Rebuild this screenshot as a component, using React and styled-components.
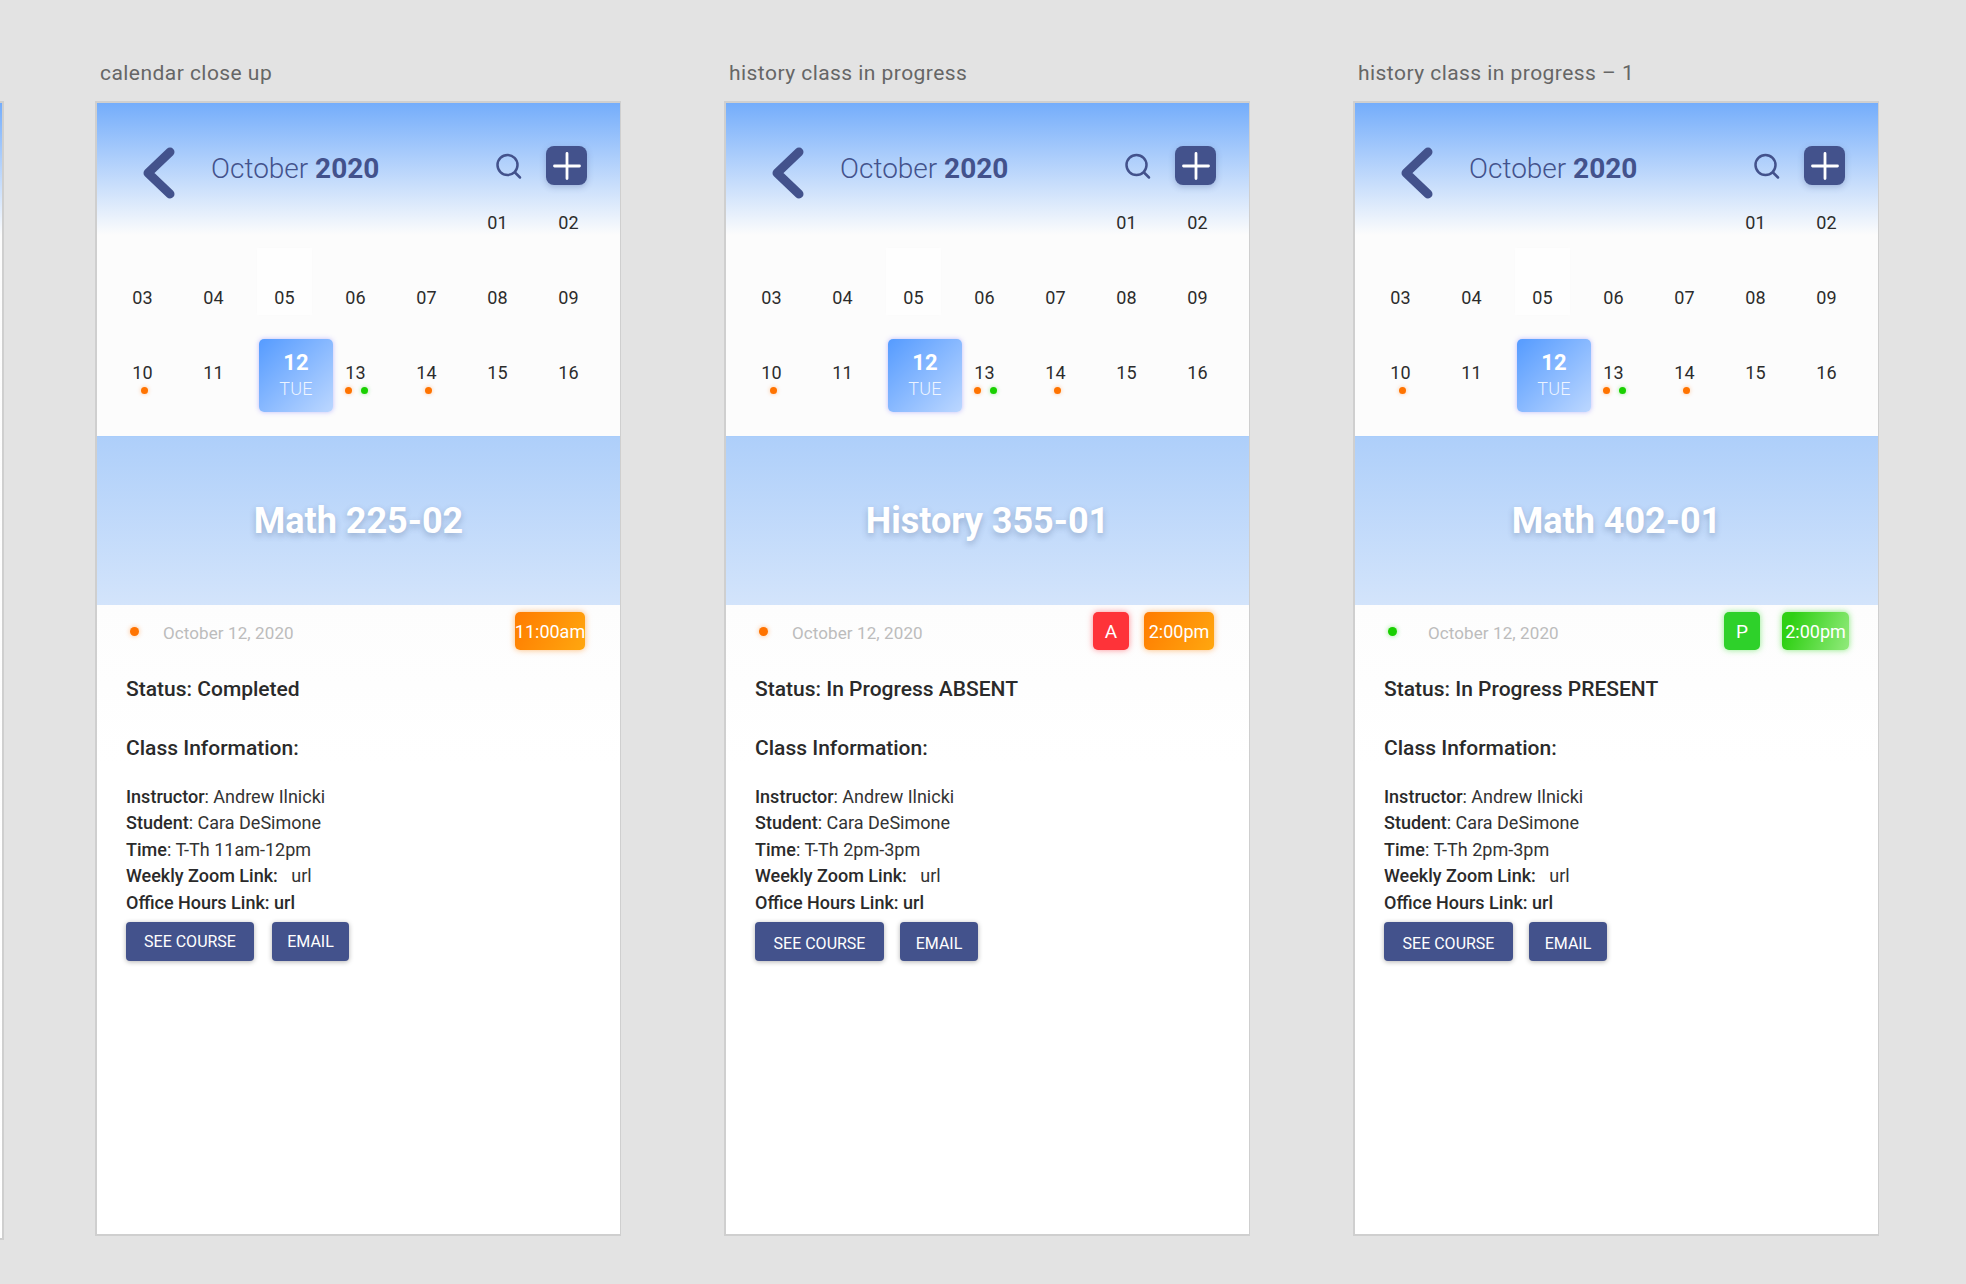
import React from 'react';
import styled, { createGlobalStyle } from 'styled-components';

const Global = createGlobalStyle`
  html, body { margin: 0; padding: 0; background: #e3e3e3; }
  body { width: 1966px; height: 1284px; overflow: hidden; font-family: Roboto, "Liberation Sans", sans-serif; }
`;
const Stage = styled.div`
  display: flex; align-items: flex-start; width: 1966px; height: 1284px; overflow: hidden; padding-top: 55px; box-sizing: border-box;
`;
const Sliver = styled.div`
  width: 2px; height: 1135px; margin-top: 46px; margin-right: 91px; flex: none; box-sizing: content-box;
  border: 2px solid #cfcfcf; border-left: 0; border-right-width: 2px;
  background: linear-gradient(#74adfb 0, #fcfcfc 132px, #fff 100%);
`;
const Column = styled.section`
  width: 526px; flex: none; margin-right: 103px;
`;
const Label = styled.div`
  height: 46px; line-height: 36px; padding-left: 5px; font-size: 21px; letter-spacing: 0.45px; color: #666;
`;
const Phone = styled.div`
  width: 523px; height: 1131px; border: 2px solid #cfcfcf; border-right-width: 1px; background: #fff; display: flex; flex-direction: column;
`;
const Calendar = styled.div`
  height: 333px; flex: none; background: linear-gradient(#74adfb 0, #fcfcfc 132px, #fcfcfc 100%);
`;
const Header = styled.header`
  height: 82px; display: flex; align-items: flex-start; padding-right: 33px; box-sizing: border-box;
`;
const Back = styled.svg`
  width: 40px; height: 60px; margin: 40px 0 0 42px; flex: none; overflow: visible;
`;
const Month = styled.div`
  margin: 49px 0 0 32px; font-size: 28px; line-height: 34px; font-weight: 300; color: #43528c; white-space: nowrap;
  b { font-weight: 700; }
`;
const SearchIcon = styled.svg`
  width: 28px; height: 28px; margin: 50px 0 0 auto; flex: none;
`;
const AddButton = styled.div`
  width: 41px; height: 39px; margin: 43px 0 0 23px; flex: none; border-radius: 8px; background: #43528c;
  box-shadow: 0 2px 6px rgba(67, 82, 140, .3); display: flex; align-items: center; justify-content: center;
`;
const Grid = styled.div`
  display: grid; grid-template-columns: repeat(7, 71px); grid-auto-rows: 75px; padding-left: 10px;
`;
const Cell = styled.div`
  position: relative; display: flex; align-items: center; justify-content: center; font-size: 18px; color: #2c2c2c; letter-spacing: .2px;
`;
const Ghost = styled.div`
  position: absolute; left: 8px; top: -12px; width: 55px; height: 67px; background: rgba(255,255,255,.75); box-shadow: 0 0 6px rgba(0,0,0,.012); z-index: 0;
`;
const CellText = styled.span`position: relative;`;
const Today = styled.div`
  position: absolute; left: 10px; top: 4px; width: 74px; height: 73px; border-radius: 5px; z-index: 1;
  background: linear-gradient(135deg, #559bff, #bcd7ff); box-shadow: 0 0 5px rgba(120, 110, 255, .45);
  color: #fff; display: flex; flex-direction: column; align-items: center;
`;
const TodayNum = styled.span`
  font-size: 22px; font-weight: 700; line-height: 26px; margin-top: 11px;
`;
const TodayDay = styled.span`
  font-size: 18px; font-weight: 300; line-height: 22px; margin-top: 2px; color: rgba(255,255,255,.85);
`;
const Dots = styled.div`
  position: absolute; top: 52px; left: 0; width: 100%; display: flex; justify-content: center; gap: 9px; padding-left: ${p => p.$shift}px; box-sizing: border-box;
`;
const Dot = styled.i`
  display: block; width: 7px; height: 7px; border-radius: 50%; background: ${p => p.$c};
  box-shadow: 0 0 4px ${p => p.$c}66;
`;
const Band = styled.div`
  height: 169px; flex: none; display: flex; align-items: center; justify-content: center;
  background: linear-gradient(#aecffa, #d3e4fb);
  border-top: 1px solid #a9cdfb; box-sizing: border-box;
`;
const Title = styled.h1`
  margin: 0; font-size: 36px; line-height: 44px; font-weight: 700; color: #fff; text-shadow: 0 3px 6px rgba(50, 70, 110, .3);
`;
const Body = styled.div`
  flex: 1; padding: 7px 0 0 29px; background: linear-gradient(#fdfdfd 0, #fff 160px);
`;
const Meta = styled.div`
  display: flex; align-items: center; height: 38px; padding-right: ${p => p.$right}px; gap: ${p => p.$gap}px;
`;
const MetaDot = styled.i`
  display: block; width: 9px; height: 9px; border-radius: 50%; margin-left: 4px; background: ${p => p.$c}; box-shadow: 0 0 5px ${p => p.$c}77;
`;
const DateText = styled.span`
  margin: 4px auto 0 9px; font-size: 17px; color: #bcbcbc; letter-spacing: .1px;
`;
const Badge = styled.div`
  width: ${p => p.$w}px; height: 38px; border-radius: 5px; display: flex; align-items: center; justify-content: center; color: #fff; flex: none;
  font-size: ${p => p.$size}px; background: ${p => p.$bg}; box-shadow: 0 0 6px ${p => p.$glow};
`;
const Heading = styled.h2`
  margin: ${p => p.$top}px 0 0; font-size: 21px; line-height: 28px; font-weight: 500; color: #2a2a2a;
`;
const Details = styled.div`
  margin-top: 22px; font-size: 18px; line-height: 26.4px; color: #333; white-space: pre;
  b { font-weight: 500; color: #2a2a2a; }
`;
const Buttons = styled.div`
  display: flex; gap: ${p => p.$gap}px; margin-top: 6px;
`;
const Button = styled.div`
  width: ${p => p.$w}px; height: 39px; border-radius: 4px; background: #43528c; color: #fff; box-shadow: 0 1px 5px rgba(0,0,0,.3);
  font-size: 16px; display: flex; align-items: center; justify-content: center; padding-top: ${p => p.$down}px; box-sizing: border-box;
`;

const ORANGE = '#ff7300';
const GREEN = '#19d000';
const ORANGE_BADGE = { bg: 'linear-gradient(120deg,#ff7b00,#ffa70f)', glow: 'rgba(255,130,0,.55)' };
const GREEN_BADGE = { bg: 'linear-gradient(110deg,#2fd014 15%,#92ea7c)', glow: 'rgba(60,220,40,.6)' };

const screens = [
  { label: 'calendar close up', title: 'Math 225-02', status: 'Status: Completed', dot: ORANGE, time: '11:00am', timeW: 70, timeStyle: ORANGE_BADGE, right: 35, gap: 15, when: 'T-Th 11am-12pm', btnGap: 18, seeW: 128, emailW: 77, down: 0 },
  { label: 'history class in progress', title: 'History 355-01', status: 'Status: In Progress ABSENT', dot: ORANGE, letter: 'A', letterBg: '#fe3339', letterGlow: 'rgba(255,50,60,.55)', time: '2:00pm', timeW: 70, timeStyle: ORANGE_BADGE, right: 35, gap: 15, when: 'T-Th 2pm-3pm', btnGap: 16, seeW: 129, emailW: 78, down: 3 },
  { label: 'history class in progress – 1', title: 'Math 402-01', status: 'Status: In Progress PRESENT', dot: GREEN, letter: 'P', letterBg: '#2ed12a', letterGlow: 'rgba(50,220,40,.55)', time: '2:00pm', timeW: 67, timeStyle: GREEN_BADGE, right: 29, gap: 22, when: 'T-Th 2pm-3pm', btnGap: 16, seeW: 129, emailW: 78, down: 3 },
];

const dates = [
  null, null, null, null, null, { n: '01' }, { n: '02' },
  { n: '03' }, { n: '04' }, { n: '05', ghost: true }, { n: '06' }, { n: '07' }, { n: '08' }, { n: '09' },
  { n: '10', dots: [ORANGE], shift: 4 }, { n: '11' }, { today: true }, { n: '13', dots: [ORANGE, GREEN], shift: 2 }, { n: '14', dots: [ORANGE], shift: 3 }, { n: '15' }, { n: '16' },
];

function Screen({ s }) {
  return (
    <Column>
      <Label>{s.label}</Label>
      <Phone>
        <Calendar>
          <Header>
            <Back viewBox="0 0 40 60">
              <path d="M31 9 L9 30 L31 51" fill="none" stroke="#43528c" strokeWidth="9" strokeLinecap="round" strokeLinejoin="round" />
            </Back>
            <Month>October <b>2020</b></Month>
            <SearchIcon viewBox="0 0 28 28">
              <circle cx="12.5" cy="12" r="10" fill="none" stroke="#43528c" strokeWidth="2.5" />
              <path d="M20 19.5 L25 24.5" stroke="#43528c" strokeWidth="2.5" strokeLinecap="round" />
            </SearchIcon>
            <AddButton>
              <svg width="28" height="28" viewBox="0 0 28 28">
                <path d="M14 1.5 V26.5 M1.5 14 H26.5" stroke="#fff" strokeWidth="2.8" strokeLinecap="round" />
              </svg>
            </AddButton>
          </Header>
          <Grid>
            {dates.map((d, i) => (
              <Cell key={i}>
                {d && d.ghost && <Ghost />}
                {d && d.n && <CellText>{d.n}</CellText>}
                {d && d.today && (
                  <Today>
                    <TodayNum>12</TodayNum>
                    <TodayDay>TUE</TodayDay>
                  </Today>
                )}
                {d && d.dots && (
                  <Dots $shift={d.shift}>
                    {d.dots.map((c, j) => <Dot key={j} $c={c} />)}
                  </Dots>
                )}
              </Cell>
            ))}
          </Grid>
        </Calendar>
        <Band><Title>{s.title}</Title></Band>
        <Body>
          <Meta $right={s.right} $gap={s.gap}>
            <MetaDot $c={s.dot} />
            <DateText>October 12, 2020</DateText>
            {s.letter && <Badge $w={36} $size={19} $bg={s.letterBg} $glow={s.letterGlow}>{s.letter}</Badge>}
            <Badge $w={s.timeW} $size={18} $bg={s.timeStyle.bg} $glow={s.timeStyle.glow}>{s.time}</Badge>
          </Meta>
          <Heading $top={25}>{s.status}</Heading>
          <Heading $top={31}>Class Information:</Heading>
          <Details>
            <div><b>Instructor</b>: Andrew Ilnicki</div>
            <div><b>Student</b>: Cara DeSimone</div>
            <div><b>Time</b>: {s.when}</div>
            <div><b>Weekly Zoom Link:</b>{'   '}url</div>
            <div><b>Office Hours Link: url</b></div>
          </Details>
          <Buttons $gap={s.btnGap}>
            <Button $w={s.seeW} $down={s.down}>SEE COURSE</Button>
            <Button $w={s.emailW} $down={s.down}>EMAIL</Button>
          </Buttons>
        </Body>
      </Phone>
    </Column>
  );
}

export default function App() {
  return (
    <>
      <Global />
      <Stage>
        <Sliver />
        {screens.map(s => <Screen key={s.label} s={s} />)}
      </Stage>
    </>
  );
}
